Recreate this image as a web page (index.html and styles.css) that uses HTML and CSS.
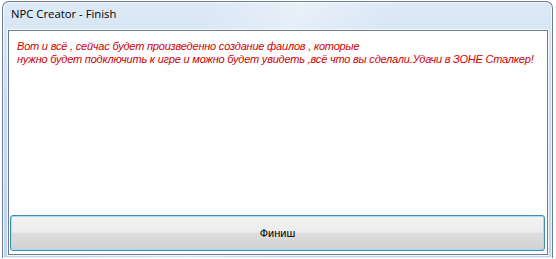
FILE: index.html
```html
<!DOCTYPE html>
<html lang="ru">

<head>
    <meta charset="UTF-8">
    <title>NPC Creator - Finish</title>
    <link rel="stylesheet" href="styles.css">
</head>

<body>
    <div class="window">
        <div class="title_bar">NPC Creator - Finish</div>
        <div class="client">
            <div class="message">
                Вот и всё , сейчас будет произведенно создание фаилов , которые<br>
                нужно будет подключить к игре и можно будет увидеть ,всё что вы сделали.Удачи в ЗОНЕ Сталкер!
            </div>
            <button class="finish">Финиш</button>
        </div>
    </div>
</body>

</html>
```
FILE: styles.css
```css
body {
    margin: 0;
    background: #ffffff;
    width: 556px;
    height: 259px;
    overflow: hidden;
}

.window {
    margin: 1px 0 0 2px;
    width: 549px;
    height: 256px;
    border: 1px solid #6e7f92;
    border-bottom: none;
    border-radius: 7px 7px 0 0;
    background:
        linear-gradient(115deg, rgba(255, 255, 255, 0) 30%, rgba(255, 255, 255, 0.35) 45%, rgba(255, 255, 255, 0) 60%),
        linear-gradient(180deg, #dde9f6 0%, #c9dcf1 40%, #bed4ee 100%);
    box-shadow: inset 0 0 0 1px rgba(255, 255, 255, 0.7);
    display: flex;
    flex-direction: column;
}

.title_bar {
    height: 28px;
    padding-left: 8px;
    font-family: "Open Sans", "Noto Sans", sans-serif;
    font-size: 11.3px;
    line-height: 24px;
    color: #000000;
}

.client {
    flex: 1;
    margin: 0 4px 3px 5px;
    border: 1px solid #6d7d8e;
    background: #ffffff;
    box-shadow: 0 0 0 1px rgba(255, 255, 255, 0.8);
    display: flex;
    flex-direction: column;
}

.message {
    flex: 1;
    padding: 9px 0 0 8px;
    font-family: "Liberation Sans", Arial, sans-serif;
    font-style: italic;
    font-size: 11px;
    letter-spacing: -0.2px;
    line-height: 13px;
    white-space: nowrap;
    color: #d00000;
}

.finish {
    margin: 0 2px 3px 1px;
    height: 36px;
    border: 1px solid #3c8fb9;
    border-radius: 3px;
    background: linear-gradient(180deg, #f3f3f3 0%, #ececec 48%, #dddddd 50%, #d1d1d1 100%);
    box-shadow: inset 0 0 0 1px #a9dcf2;
    font-family: "Liberation Sans", Arial, sans-serif;
    font-size: 11px;
    font-weight: normal;
    color: #000000;
}
```
